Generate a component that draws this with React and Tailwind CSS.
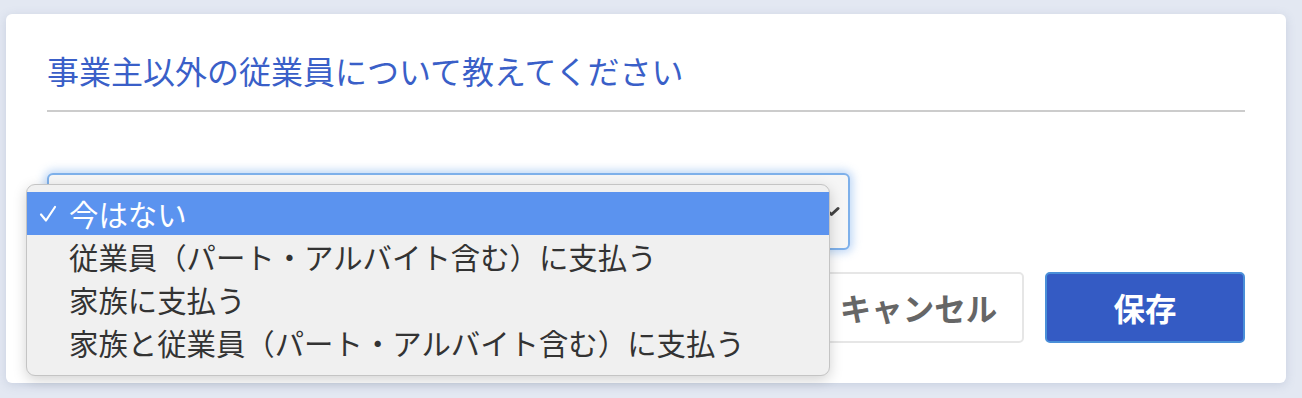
const options = [
  "今はない",
  "従業員（パート・アルバイト含む）に支払う",
  "家族に支払う",
  "家族と従業員（パート・アルバイト含む）に支払う",
];

const jp = { fontFamily: '"Noto Sans CJK JP", "Noto Sans", sans-serif' };

const App = () => {
  return (
    <div
      className="min-h-[398px] w-full bg-[#e3e8f2] px-[6px] pt-[14px] pb-[15px]"
      style={jp}
    >
      <section className="relative w-[1280px] rounded-[6px] bg-white px-[41px] pt-[35px] pb-[40px] shadow-[0_2px_10px_rgba(120,135,170,0.25)]">
        <h2 className="text-[32px] leading-[43px] text-[#3a5fc8]">
          事業主以外の従業員について教えてください
        </h2>
        <div className="mt-[18px] h-[2px] w-full bg-[#cccccc]" />

        <div className="mt-[61px] flex h-[77px] w-[803px] items-center justify-end rounded-[6px] border-2 border-[#7eb0ea] bg-[#f6f6f6] pr-[8px] shadow-[0_0_8px_3px_rgba(120,170,235,0.45)]">
          <svg width="17" height="11" viewBox="0 0 17 11" fill="none">
            <path
              d="M2 2.5 L8.5 8.5 L15 2.5"
              stroke="#444"
              strokeWidth="3"
              strokeLinecap="round"
              strokeLinejoin="round"
            />
          </svg>
        </div>

        <div className="mt-[22px] flex justify-end gap-[21px]">
          <button className="h-[71px] w-[211px] rounded-[5px] border-2 border-[#e6e6e6] bg-white text-[31.5px] font-bold text-[#666666]">
            キャンセル
          </button>
          <button className="h-[71px] w-[200px] rounded-[5px] border-2 border-[#4a8fd8] bg-[#345bc4] text-[31.5px] font-bold text-white">
            保存
          </button>
        </div>

        <div className="absolute left-[20px] top-[170px] w-[804px] rounded-[9px] border border-[#c4c4c4] bg-[#f0f0f0] pt-[7px] pb-[11px] shadow-[0_4px_14px_rgba(0,0,0,0.18)]">
          {options.map((label, i) => (
            <div
              key={label}
              className={
                i === 0
                  ? "flex h-[43px] items-center bg-[#5b93ef] pl-[42px] text-white"
                  : "flex h-[43px] items-center pl-[42px] text-[#333333]"
              }
            >
              {i === 0 && (
                <svg
                  className="absolute left-[12px]"
                  width="18"
                  height="18"
                  viewBox="0 0 18 18"
                  fill="none"
                >
                  <path
                    d="M2 9.5 L7 15.5 L16 2"
                    stroke="white"
                    strokeWidth="2.2"
                    strokeLinecap="round"
                    strokeLinejoin="round"
                  />
                </svg>
              )}
              <span className="text-[29.4px] leading-[43px]">{label}</span>
            </div>
          ))}
        </div>
      </section>
    </div>
  );
};

export default App;
